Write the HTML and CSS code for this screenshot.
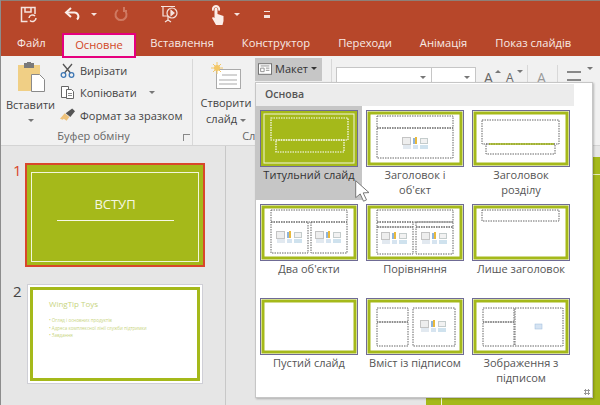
FILE: index.html
```html
<!DOCTYPE html>
<html lang="uk">
<head>
    <meta charset="UTF-8">
    <title>Макет</title>
    <link rel="stylesheet" href="styles.css">
</head>
<body>
    <svg class="defs" width="0" height="0">
        <symbol id="content" viewBox="0 0 27 13">
            <rect x="0.5" y="0.5" width="8" height="7" fill="#eee" stroke="#c4c4c4"/>
            <rect x="1" y="8" width="8" height="4" fill="#e2e9f0"/>
            <rect x="11" y="1" width="2" height="6" fill="#8fb4dc"/>
            <rect x="13" y="0" width="2" height="7" fill="#e8b93c"/>
            <rect x="11" y="8" width="5" height="4" fill="#d6e4f0"/>
            <rect x="18.5" y="1.5" width="7" height="5" fill="#f2f2f2" stroke="#c4cccc"/>
            <rect x="18" y="8" width="8" height="4" fill="#cfe2ee"/>
        </symbol>
    </svg>

    <div class="app">
        <div class="titlebar">
            <svg class="qa qa-save" width="17" height="17" viewBox="0 0 17 17" fill="none" stroke="#f5e4df" stroke-width="1.5">
                <path d="M15 8V1.500H1.500V15.500h6"/>
                <path d="M5 2v4h6V2"/>
                <path d="M9 12a3.500 3.500 0 0 1 6-2M16 12a3.500 3.500 0 0 1-6 2.500"/>
            </svg>
            <svg class="qa qa-undo" width="17" height="15" viewBox="0 0 17 15" fill="none" stroke="#fbeee9" stroke-width="2">
                <path d="M7 1L2 5.500 7 10"/>
                <path d="M2 5.500h8a4 4 0 0 1 3 7"/>
            </svg>
            <span class="caret caret-light qa-caret1"></span>
            <svg class="qa qa-redo" width="14" height="15" viewBox="0 0 14 15" fill="none" stroke="#cf7a62" stroke-width="2">
                <path d="M10 3a5.500 5.500 0 1 1-6 0"/>
                <path d="M10 0v4h3"/>
            </svg>
            <svg class="qa qa-show" width="18" height="19" viewBox="0 0 18 19" fill="none" stroke="#f5e4df" stroke-width="1.200">
                <path d="M0 1.500h14M2 2v9h5M7 11v4M4 17l3-2 3 2"/>
                <circle cx="11" cy="8" r="5"/>
                <path d="M10 5.500l3 2.500-3 2.500z" fill="#f5e4df"/>
            </svg>
            <svg class="qa qa-touch" width="14" height="20" viewBox="0 0 14 20" fill="#fbeee9">
                <path d="M5 0a4 4 0 0 1 3.500 6L7 5.300A2.200 2.200 0 1 0 3 5.300L1.500 6A4 4 0 0 1 5 0z"/>
                <path d="M3.500 4a1.500 1.500 0 0 1 3 0v5l6 2v5l-1 4H5L1 13l1-1 1.500 1z"/>
            </svg>
            <span class="caret caret-light qa-caret2"></span>
            <span class="qa-more"></span>
        </div>

        <div class="tabs">
            <span class="tab">Файл</span>
            <span class="tab tab-active">Основне</span>
            <span class="tab">Вставлення</span>
            <span class="tab">Конструктор</span>
            <span class="tab">Переходи</span>
            <span class="tab">Анімація</span>
            <span class="tab">Показ слайдів</span>
        </div>

        <div class="ribbon">
            <div class="group group-clip">
                <div class="group-body">
                    <div class="paste">
                        <svg width="28" height="30" viewBox="0 0 28 30">
                            <rect x="1" y="3" width="22" height="26" fill="#f0cf85"/>
                            <rect x="7" y="1" width="10" height="5" fill="#7a7a7a"/>
                            <rect x="10" y="0" width="4" height="3" fill="#7a7a7a"/>
                            <path d="M14.500 12.500h8l5 5v12h-13z" fill="#fff" stroke="#8a8a8a"/>
                        </svg>
                        <span class="paste-label">Вставити</span>
                        <span class="caret"></span>
                    </div>
                    <div class="clip-list">
                        <div class="clip-row">
                            <svg width="15" height="15" viewBox="0 0 15 15" fill="none" stroke="#555" stroke-width="1.300">
                                <path d="M3 1l7.500 9M12 1L4.500 10"/>
                                <circle cx="3.500" cy="12" r="2.300" stroke="#3f78b5"/>
                                <circle cx="11.500" cy="12" r="2.300" stroke="#3f78b5"/>
                            </svg>
                            <span>Вирізати</span>
                        </div>
                        <div class="clip-row">
                            <svg width="15" height="15" viewBox="0 0 15 15" fill="#fff" stroke="#666">
                                <path d="M1.500 1.500h7v11h-7z"/>
                                <path d="M6.500 4.500h5l2 2v7h-7z"/>
                                <path d="M8 8.500h4M8 10.500h4" stroke="#8a8a8a"/>
                            </svg>
                            <span>Копіювати</span>
                            <span class="caret caret-copy"></span>
                        </div>
                        <div class="clip-row">
                            <svg width="15" height="14" viewBox="0 0 16 14">
                                <path d="M0 11l5-6 5 4-3 4-3-2-1 1z" fill="#eec27b"/>
                                <path d="M6 5l7-5 3 3-5 6z" fill="#555"/>
                            </svg>
                            <span>Формат за зразком</span>
                        </div>
                    </div>
                </div>
                <div class="group-label">Буфер обміну</div>
                <span class="launcher"></span>
            </div>

            <div class="group group-slides">
                <div class="group-body">
                    <div class="new-slide">
                        <svg width="30" height="28" viewBox="0 0 30 28">
                            <rect x="5.500" y="7.500" width="24" height="19" fill="#fff" stroke="#aaa"/>
                            <path d="M11 13h15M8 18h18M8 22h18" stroke="#c6c6c6" stroke-width="1.500"/>
                            <circle cx="6" cy="6" r="3" fill="#f3c766"/>
                            <path d="M6 0v12M0 6h12M2 2l8 8M10 2l-8 8" stroke="#f3c766"/>
                        </svg>
                        <span class="new-slide-label">Створити</span>
                        <span class="new-slide-label">слайд <span class="caret"></span></span>
                    </div>
                    <div class="layout-btn">
                        <svg width="14" height="12" viewBox="0 0 16 13" fill="#fff" stroke="#666">
                            <rect x="0.500" y="0.500" width="15" height="12"/>
                            <path d="M3 3h10M3 5.500h4v4H3zM9 5.500h4M9 8h4" stroke="#888"/>
                        </svg>
                        <span>Макет</span>
                        <span class="caret caret-dark"></span>
                    </div>
                </div>
                <div class="group-label">Слайди</div>
            </div>

            <div class="group group-font">
                <div class="font-box font-name"><span class="caret"></span></div>
                <div class="font-box font-size"><span class="caret"></span></div>
                <span class="grow">A<i class="caret caret-up"></i></span>
                <span class="grow grow-small">A<i class="caret caret-up"></i></span>
                <span class="tool-sep"></span>
                <span class="clear-a">A</span>
                <span class="tool-sep"></span>
                <span class="bullets"></span>
                <span class="caret"></span>
            </div>
        </div>

        <div class="work">
            <div class="thumbs">
                <div class="thumb-row">
                    <span class="num num-on">1</span>
                    <div class="mini mini-on">
                        <div class="mini-frame">
                            <span class="mini-title">ВСТУП</span>
                            <span class="mini-rule"></span>
                        </div>
                    </div>
                </div>
                <div class="thumb-row">
                    <span class="num">2</span>
                    <div class="mini mini-text">
                        <div class="mini-page">
                            <div class="page-head">WingTip Toys</div>
                            <div class="page-line">• Огляд і основних продуктів</div>
                            <div class="page-line">• Адреса комплексної лінії служби підтримки</div>
                            <div class="page-line">• Завдання</div>
                        </div>
                    </div>
                </div>
            </div>
            <div class="stage">
                <div class="stage-slide">
                    <div class="stage-frame"></div>
                </div>
            </div>
        </div>

        <div class="menu">
            <div class="menu-head">Основа</div>
            <div class="layouts">
                <div class="layout layout-on">
                    <svg class="lay lay-fill" viewBox="0 0 98 57">
                        <rect class="edge" x="0.500" y="0.500" width="97" height="56"/>
                        <rect class="line-w" x="4" y="4" width="90" height="49"/>
                        <rect class="ph-w" x="11" y="8" width="77" height="22"/>
                        <rect class="ph-w" x="16" y="30" width="68" height="12"/>
                    </svg>
                    <span>Титульний слайд</span>
                </div>
                <div class="layout">
                    <svg class="lay" viewBox="0 0 98 57">
                        <rect class="edge" x="0.500" y="0.500" width="97" height="56"/>
                        <rect class="band" x="3" y="3" width="92" height="51"/>
                        <rect class="ph" x="11" y="6" width="76" height="12"/>
                        <rect class="ph" x="11" y="18" width="76" height="30"/>
                        <use href="#content" x="36" y="27" width="27" height="13"/>
                    </svg>
                    <span>Заголовок і<br>об'єкт</span>
                </div>
                <div class="layout">
                    <svg class="lay" viewBox="0 0 98 57">
                        <rect class="edge" x="0.500" y="0.500" width="97" height="56"/>
                        <rect class="band" x="3" y="3" width="92" height="51"/>
                        <rect class="ph" x="10" y="10" width="77" height="24"/>
                        <rect class="ph" x="14" y="34" width="69" height="10"/>
                        <path d="M17 34h65" stroke="#a5b91a" stroke-width="1.500"/>
                    </svg>
                    <span>Заголовок<br>розділу</span>
                </div>
                <div class="layout">
                    <svg class="lay" viewBox="0 0 98 57">
                        <rect class="edge" x="0.500" y="0.500" width="97" height="56"/>
                        <rect class="band" x="3" y="3" width="92" height="51"/>
                        <rect class="ph" x="11" y="6" width="76" height="12"/>
                        <rect class="ph" x="11" y="18" width="37" height="31"/>
                        <rect class="ph" x="51" y="18" width="36" height="31"/>
                        <use href="#content" x="16" y="27" width="27" height="13"/>
                        <use href="#content" x="55" y="27" width="27" height="13"/>
                    </svg>
                    <span>Два об'єкти</span>
                </div>
                <div class="layout">
                    <svg class="lay" viewBox="0 0 98 57">
                        <rect class="edge" x="0.500" y="0.500" width="97" height="56"/>
                        <rect class="band" x="3" y="3" width="92" height="51"/>
                        <rect class="ph" x="11" y="6" width="76" height="12"/>
                        <rect class="ph" x="11" y="18" width="36" height="5"/>
                        <rect class="ph" x="50" y="18" width="37" height="5"/>
                        <rect class="ph" x="11" y="23" width="36" height="27"/>
                        <rect class="ph" x="50" y="23" width="37" height="27"/>
                        <use href="#content" x="15" y="28" width="27" height="13"/>
                        <use href="#content" x="55" y="28" width="27" height="13"/>
                    </svg>
                    <span>Порівняння</span>
                </div>
                <div class="layout">
                    <svg class="lay" viewBox="0 0 98 57">
                        <rect class="edge" x="0.500" y="0.500" width="97" height="56"/>
                        <rect class="band" x="3" y="3" width="92" height="51"/>
                        <rect class="ph" x="10" y="6" width="77" height="11"/>
                    </svg>
                    <span>Лише заголовок</span>
                </div>
                <div class="layout">
                    <svg class="lay" viewBox="0 0 98 57">
                        <rect class="edge" x="0.500" y="0.500" width="97" height="56"/>
                        <rect class="band" x="3" y="3" width="92" height="51"/>
                    </svg>
                    <span>Пустий слайд</span>
                </div>
                <div class="layout">
                    <svg class="lay" viewBox="0 0 98 57">
                        <rect class="edge" x="0.500" y="0.500" width="97" height="56"/>
                        <rect class="band" x="3" y="3" width="92" height="51"/>
                        <rect class="ph" x="11" y="10" width="31" height="14"/>
                        <rect class="ph" x="11" y="24" width="31" height="24"/>
                        <rect class="ph" x="47" y="10" width="42" height="38"/>
                        <use href="#content" x="54" y="22" width="27" height="13"/>
                    </svg>
                    <span>Вміст із підписом</span>
                </div>
                <div class="layout">
                    <svg class="lay" viewBox="0 0 98 57">
                        <rect class="edge" x="0.500" y="0.500" width="97" height="56"/>
                        <rect class="band" x="3" y="3" width="92" height="51"/>
                        <rect class="ph" x="11" y="10" width="31" height="14"/>
                        <rect class="ph" x="11" y="24" width="31" height="24"/>
                        <rect class="ph" x="43" y="10" width="48" height="38"/>
                        <rect x="63" y="26" width="7" height="5" fill="#d5e3f2" stroke="#9dbbdc" stroke-width="0.500"/>
                    </svg>
                    <span>Зображення з<br>підписом</span>
                </div>
            </div>
            <span class="grip"></span>
        </div>

        <svg class="pointer" width="15" height="23" viewBox="0 0 15 23">
            <path d="M0.700 0.700v17l4.500-3.800 3.300 7.300 3-1.300-3.300-7 5.800-0.300z" fill="#fff" stroke="#777"/>
        </svg>
    </div>
</body>
</html>
```

FILE: styles.css
```css
* {
    box-sizing: border-box;
}

body {
    margin: 0;
    font-family: 'Open Sans', 'Liberation Sans', sans-serif;
    overflow: hidden;
}

.defs {
    position: absolute;
}

.app {
    position: relative;
    width: 600px;
    height: 405px;
    display: flex;
    flex-direction: column;
    overflow: hidden;
    border-left: 1px solid #8c8c8c;
    background-color: #e6e6e6;
}

/* title bar */
.titlebar {
    height: 33px;
    flex: none;
    display: flex;
    align-items: center;
    padding-bottom: 5px;
    background-color: #b7472a;
    border-top: 1px solid #8d8078;
}

.qa {
    flex: none;
}

.qa-save {
    margin-left: 19px;
}

.qa-undo {
    margin-left: 27px;
}

.qa-caret1 {
    margin-left: 10px;
}

.qa-redo {
    margin-left: 17px;
}

.qa-show {
    margin-left: 33px;
}

.qa-touch {
    margin-left: 32px;
}

.qa-caret2 {
    margin-left: 9px;
}

.qa-more {
    margin-left: 24px;
    width: 6px;
    height: 7px;
    border-top: 1px solid #f5e4df;
    border-bottom: 3px solid #f5e4df;
}

.caret {
    display: inline-block;
    width: 0;
    height: 0;
    border-left: 3px solid transparent;
    border-right: 3px solid transparent;
    border-top: 3px solid #777;
}

.caret-light {
    border-top-color: #f5e4df;
}

.caret-dark {
    border-top-color: #333;
}

/* tabs */
.tabs {
    height: 23px;
    flex: none;
    display: flex;
    padding-left: 2px;
    background-color: #b7472a;
}

.tab {
    padding: 0 14px;
    font-size: 11.200px;
    line-height: 20px;
    color: #f8ebe6;
    white-space: nowrap;
}

.tab-active {
    margin: 0 0 0 2px;
    padding: 0 11.500px;
    height: 25px;
    background-color: #f1f1f1;
    border: 2px solid #e6007e;
    line-height: 19px;
    color: #d24726;
    z-index: 1;
}

/* ribbon */
.ribbon {
    height: 90px;
    flex: none;
    display: flex;
    background-color: #f1f1f1;
    border-bottom: 1px solid #d4d4d4;
    font-size: 11px;
    color: #444;
}

.group {
    position: relative;
    display: flex;
    flex-direction: column;
    flex: none;
    margin: 3px 0 0;
    border-right: 1px solid #d8d8d8;
}

.group-clip {
    width: 192px;
}

.group-slides {
    width: 139px;
}

.group-body {
    flex: 1;
    display: flex;
}

.group-label {
    height: 16px;
    font-size: 11px;
    line-height: 14px;
    text-align: center;
    color: #666;
    padding-right: 6px;
}

.group-slides .group-label {
    padding: 0;
}

.launcher {
    position: absolute;
    right: 2px;
    bottom: 4px;
    width: 7px;
    height: 7px;
    border-left: 1px solid #888;
    border-top: 1px solid #888;
}

.paste {
    width: 59px;
    display: flex;
    flex-direction: column;
    align-items: center;
    padding-top: 3px;
    line-height: 16px;
}

.paste-label {
    margin-top: 5px;
}

.paste .caret {
    margin-top: 6px;
}

.clip-list {
    display: flex;
    flex-direction: column;
}

.clip-row {
    height: 22.500px;
    display: flex;
    align-items: center;
    gap: 5px;
    white-space: nowrap;
}

.caret-copy {
    margin-left: 7px;
}

.new-slide {
    width: 54px;
    margin-left: 6px;
    flex: none;
    display: flex;
    flex-direction: column;
    align-items: center;
    line-height: 16px;
    padding-top: 3px;
}

.new-slide svg {
    margin-bottom: 5px;
}

.new-slide-label {
    white-space: nowrap;
}

.new-slide-label .caret {
    vertical-align: middle;
}

.layout-btn {
    width: 67px;
    height: 23px;
    margin: -1px 0 0 2px;
    padding: 0 0 2px 3px;
    flex: none;
    display: flex;
    align-items: center;
    gap: 3px;
    background-color: #c6c6c6;
    color: #333;
}

.group-font {
    margin: 4px 0 0;
    padding: 7px 0 0 4px;
    flex: 1;
    flex-direction: row;
    align-items: flex-start;
    border-right: 0;
}

.font-box {
    height: 20px;
    background-color: #fff;
    border: 1px solid #c6c6c6;
    position: relative;
}

.font-name {
    width: 96px;
}

.font-size {
    width: 45px;
    margin-left: -1px;
}

.font-box .caret {
    position: absolute;
    right: 5px;
    top: 8px;
}

.grow {
    width: 12px;
    margin-left: 8px;
    font-size: 14px;
    line-height: 22px;
    color: #666;
    position: relative;
}

.grow i {
    position: absolute;
    right: -5px;
    top: 3px;
}

.grow .caret-up {
    border-top: 0;
    border-bottom: 3px solid #777;
}

.grow-small {
    margin-left: 10px;
    font-size: 12px;
}

.grow-small .caret-up {
    border-bottom: 0;
    border-top: 3px solid #777;
}

.tool-sep {
    width: 1px;
    height: 24px;
    margin: -2px 9px 0 9px;
    background-color: #d8d8d8;
}

.clear-a {
    font-size: 14px;
    color: #999;
    line-height: 22px;
    width: 11px;
}

.bullets {
    width: 14px;
    height: 10px;
    margin: 4px 6px 0 0;
    border-top: 2px solid #888;
    border-bottom: 2px solid #888;
}

/* work area */
.work {
    flex: 1;
    display: flex;
    min-height: 0;
}

.thumbs {
    width: 225px;
    flex: none;
    padding-top: 17px;
    border-right: 1px solid #c8c8c8;
}

.thumb-row {
    display: flex;
    align-items: flex-start;
    margin-bottom: 17px;
}

.num {
    width: 24px;
    padding-left: 12px;
    font-size: 15px;
    line-height: 15px;
    color: #444;
    flex: none;
}

.num-on {
    color: #d9472b;
}

.mini {
    display: flex;
}

.mini-on {
    width: 180px;
    height: 104px;
    padding: 7px 4px 3px;
    background-color: #a5b91a;
    border: 2px solid #d9472b;
}

.mini-frame {
    width: 100%;
    display: flex;
    flex-direction: column;
    align-items: center;
    padding-top: 21px;
    border: 1px solid #f3f6da;
}

.mini-title {
    font-size: 13px;
    line-height: 20px;
    color: #f6f8e4;
}

.mini-rule {
    width: 117px;
    height: 1px;
    margin-top: 6px;
    background-color: #f6f8e4;
}

.mini-text {
    width: 176px;
    height: 100px;
    margin-left: 2px;
    padding: 2px;
    background-color: #fff;
    border: 1px solid #cfcfd6;
}

.mini-page {
    width: 100%;
    padding: 8px 0 0 16px;
    border: 3px solid #a5b91a;
    color: #c8d480;
    white-space: nowrap;
}

.page-head {
    font-size: 8px;
    line-height: 11px;
    margin-bottom: 8px;
}

.page-line {
    font-size: 4.500px;
    line-height: 7.500px;
}

.stage {
    flex: 1;
    padding: 11px 0 0 200px;
}

.stage-slide {
    height: 100%;
    padding: 17px 0 0 15px;
    background-color: #a5b91a;
}

.stage-frame {
    height: 100%;
    border-top: 1px solid #e6ecb8;
    border-left: 1px solid #f3f6da;
}

/* layout menu, lies over the ribbon and the stage */
.menu {
    position: absolute;
    left: 254px;
    top: 82px;
    width: 338px;
    height: 316px;
    background-color: #fff;
    border: 1px solid #c6c6c6;
    box-shadow: 1px 1px 2px rgba(0, 0, 0, 0.25);
}

.menu-head {
    width: 318px;
    height: 22px;
    margin-top: 1px;
    padding-left: 9px;
    background-color: #ececec;
    font-size: 10.500px;
    font-weight: 600;
    line-height: 21px;
    color: #555;
}

.layouts {
    display: grid;
    grid-template-columns: repeat(3, 106px);
    grid-auto-rows: 94px;
}

.layout {
    display: flex;
    flex-direction: column;
    align-items: center;
    padding-top: 4px;
    font-size: 11px;
    line-height: 15px;
    text-align: center;
    color: #555;
}

.layout-on {
    background-color: #c6c6c6;
    color: #333;
}

.lay {
    width: 98px;
    height: 57px;
    flex: none;
}

.edge {
    fill: #fff;
    stroke: #6f6b95;
}

.lay-fill .edge {
    fill: #a5b91a;
    stroke: #6f6b95;
}

.band {
    fill: #fff;
    stroke: #a5b91a;
    stroke-width: 3;
}

.line-w {
    fill: none;
    stroke: #f3f6da;
}

.ph,
.ph-w {
    fill: none;
    stroke: #666;
    stroke-width: 1;
    stroke-dasharray: 1.500 1;
}

.ph-w {
    stroke: #fff;
    stroke-width: 1.200;
}

.grip {
    position: absolute;
    right: 2px;
    bottom: 2px;
    width: 6px;
    height: 6px;
    background: radial-gradient(circle, #999 1px, transparent 1.200px) 0 0 / 3px 3px;
}

.pointer {
    position: absolute;
    left: 354px;
    top: 180px;
}
```
